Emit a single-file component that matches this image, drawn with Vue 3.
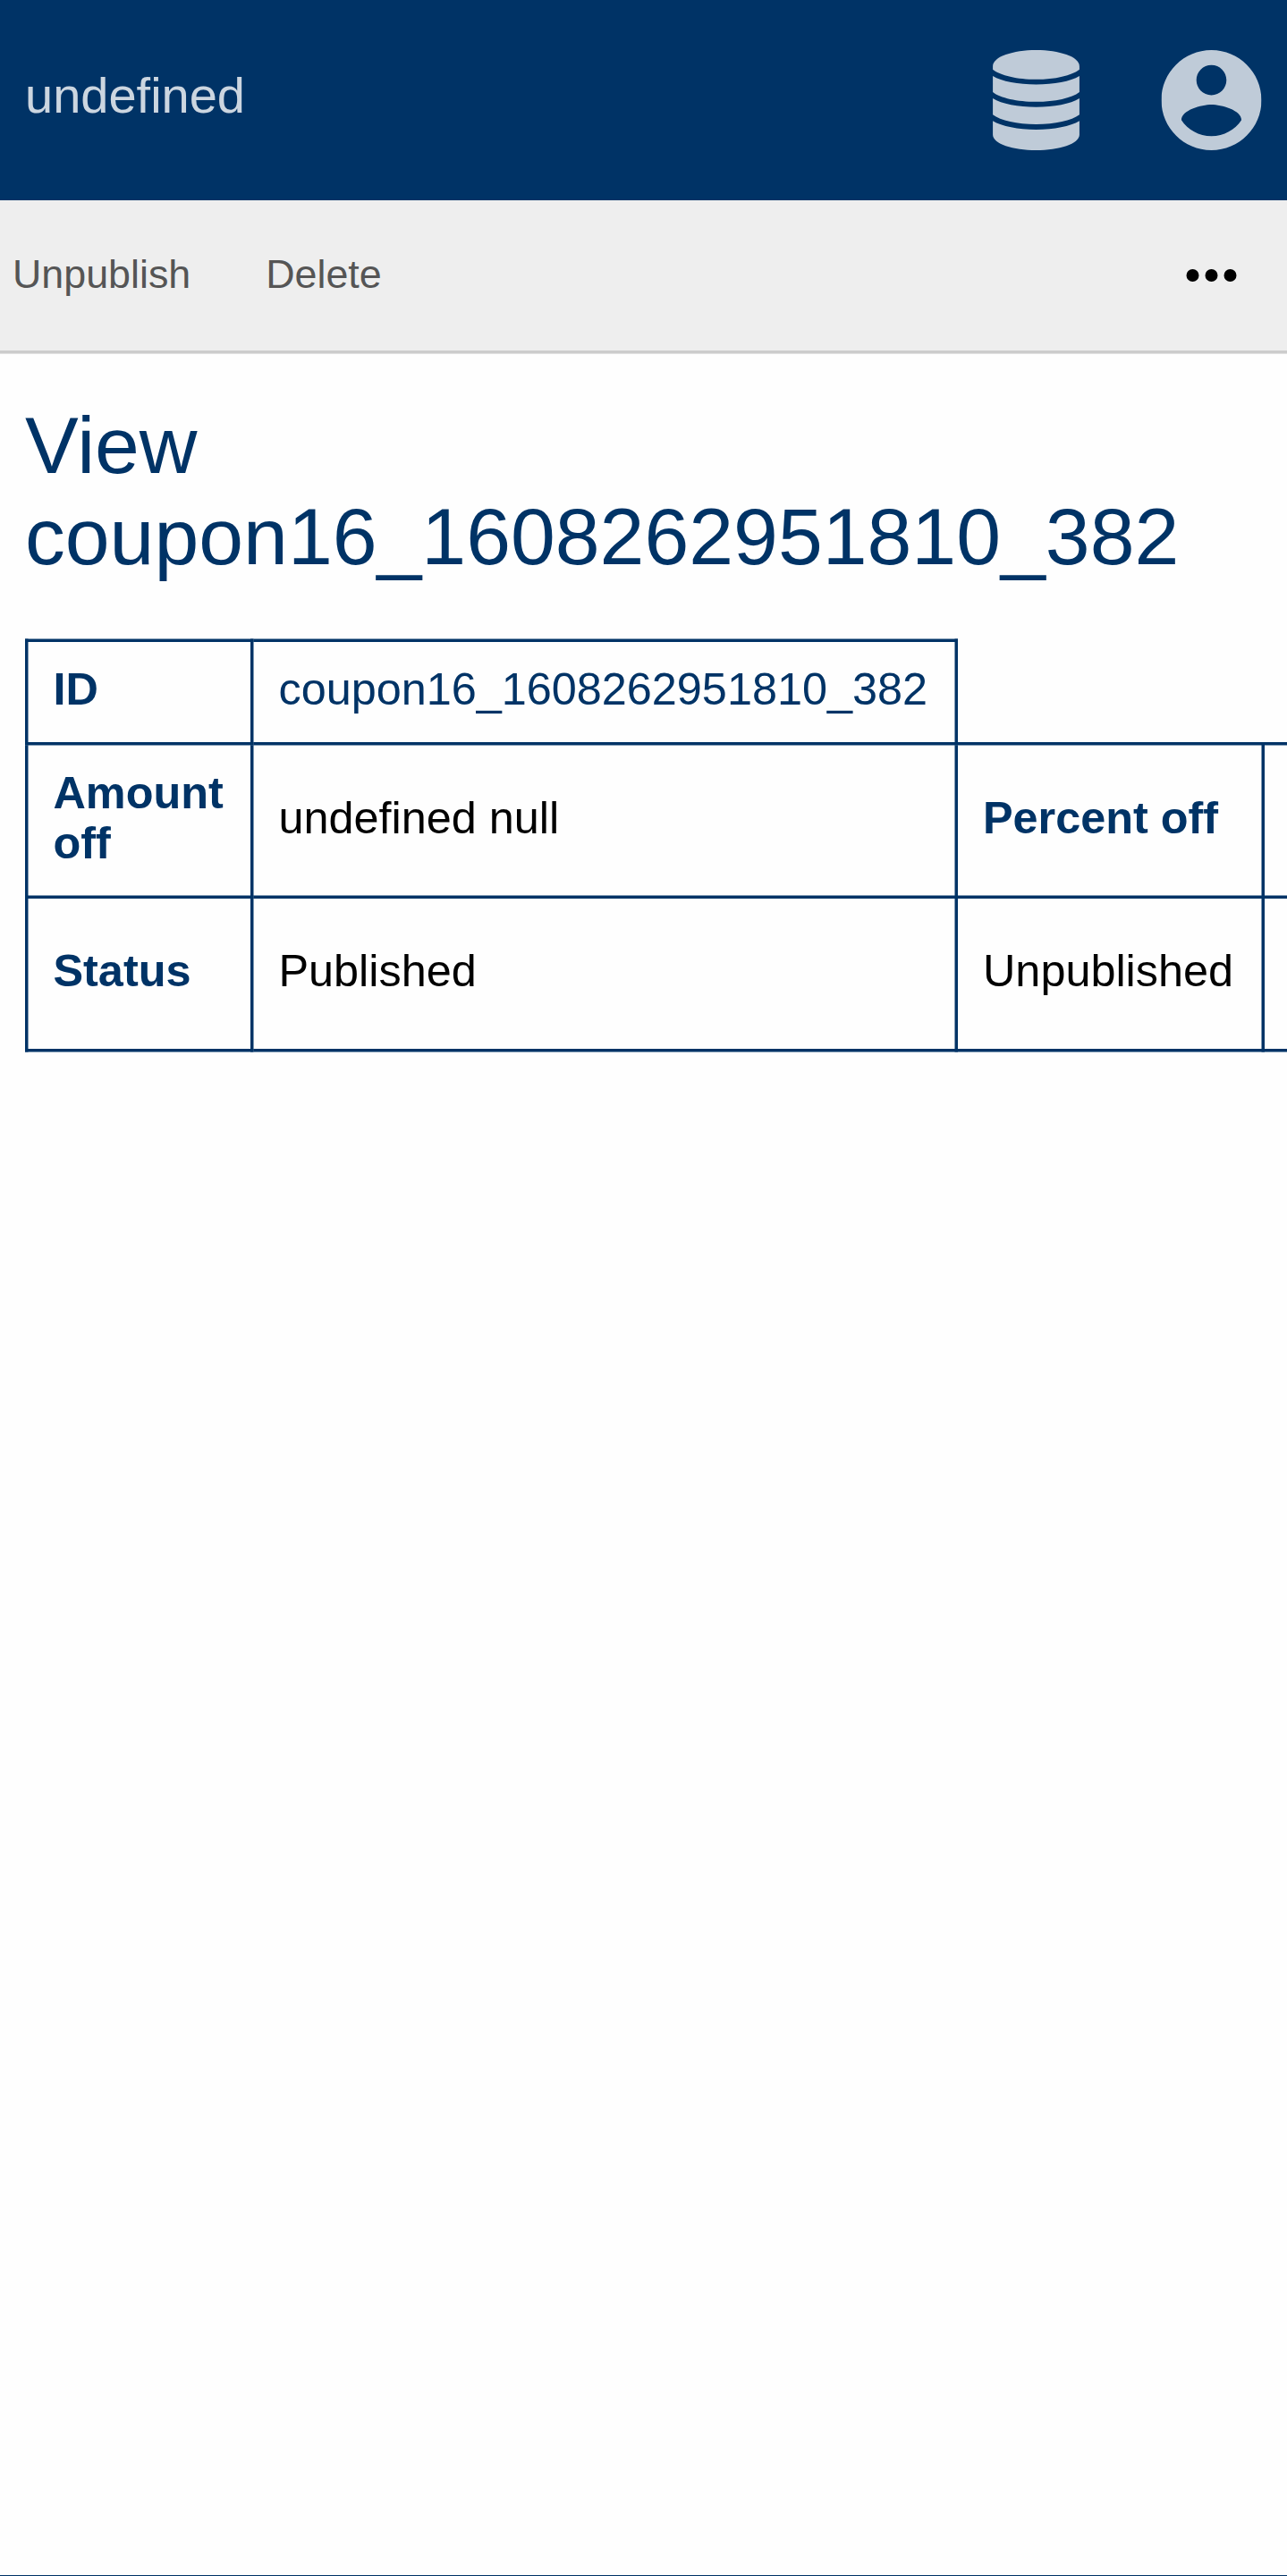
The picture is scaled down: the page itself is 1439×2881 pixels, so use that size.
<script setup>
const title = 'undefined'
const actions = ['Unpublish', 'Delete']
const coupon = 'coupon16_1608262951810_382'
</script>

<template>
  <div class="viewport">
    <div class="screen">
      <header class="header">
        <span class="brand">{{ title }}</span>
        <nav class="menus">
          <svg class="icon" viewBox="-22.75 0 336 336">
            <path d="M0 54C0 22 68 0 145.25 0S290.5 22 290.5 54V65C265 85 208 98.5 145.25 98.5S25 85 0 65Z" />
            <path d="M0 87C30 105 85 115.5 145.25 115.5S260 105 290.5 87V141C265 161 208 173.5 145.25 173.5S25 161 0 141Z" />
            <path d="M0 162C30 181 85 191 145.25 191S260 181 290.5 162V217C265 237 208 249 145.25 249S25 237 0 217Z" />
            <path d="M0 238C30 256 85 267 145.25 267S260 256 290.5 238V284C290.5 314 222 336 145.25 336S0 314 0 284Z" />
          </svg>
          <svg class="icon" viewBox="2 2 20 20">
            <path d="M12 2C6.48 2 2 6.48 2 12s4.48 10 10 10 10-4.48 10-10S17.52 2 12 2zm0 3c1.66 0 3 1.34 3 3s-1.34 3-3 3-3-1.34-3-3 1.34-3 3-3zm0 14.2c-2.5 0-4.71-1.28-6-3.22.03-1.99 4-3.08 6-3.08 1.99 0 5.97 1.09 6 3.08-1.29 1.94-3.5 3.22-6 3.22z" />
          </svg>
        </nav>
      </header>
      <div class="toolbar">
        <a v-for="action in actions" :key="action" class="action">{{ action }}</a>
        <svg class="more" viewBox="0 0 24 24">
          <circle cx="6" cy="12" r="2" />
          <circle cx="12" cy="12" r="2" />
          <circle cx="18" cy="12" r="2" />
        </svg>
      </div>
      <main class="content">
        <h1>View {{ coupon }}</h1>
        <table>
          <colgroup>
            <col class="c1" /><col class="c2" /><col class="c3" /><col class="c4" />
          </colgroup>
          <tbody>
            <tr>
              <th>ID</th>
              <td><a class="link">{{ coupon }}</a></td>
            </tr>
            <tr class="tall">
              <th>Amount off</th>
              <td>undefined null</td>
              <th>Percent off</th>
              <td></td>
            </tr>
            <tr class="tall">
              <th>Status</th>
              <td>Published</td>
              <td>Unpublished</td>
              <td></td>
            </tr>
          </tbody>
        </table>
      </main>
    </div>
  </div>
</template>

<style>
body {
  background: #036;
}
</style>

<style scoped>
.viewport {
  width: 100%;
  height: 2880px;
  overflow: hidden;
  background: #fefefe;
  border-bottom: 1px solid #036;
}
/* Phone-sized layout, enlarged to the device's 3.5 pixel ratio */
.screen {
  width: 412px;
  transform: scale(3.5);
  transform-origin: 0 0;
  color: #000;
  font-family: "Liberation Sans", Arial, sans-serif;
  font-size: 14.4px;
}
.header {
  display: flex;
  justify-content: space-between;
  align-items: flex-start;
  height: 64px;
  padding: 16px 8.857px 0 8px;
  box-sizing: border-box;
  background: #036;
}
.brand {
  margin-top: 5px;
  font-size: 16px;
  line-height: 19px;
  color: rgba(255, 255, 255, 0.8);
}
.menus {
  display: flex;
  gap: 24px;
}
.icon {
  display: block;
  width: 32px;
  height: 32px;
  fill: rgba(255, 255, 255, 0.75);
}
.toolbar {
  display: flex;
  align-items: center;
  gap: 24px;
  height: 48px;
  padding: 0 12.857px 0 4px;
  background: #eee;
  border-bottom: 1px solid #ccc;
}
.action {
  padding-bottom: 0.3px;
  font-size: 12.8px;
  line-height: 14px;
  color: #555;
}
.more {
  width: 24px;
  height: 24px;
  margin-left: auto;
}
.content {
  width: 411px;
  box-sizing: border-box;
  padding: 15px 8px 0;
  overflow: hidden;
  /* half a device pixel, so the rules fall on the device grid */
  transform: translateY(0.143px);
}
h1 {
  margin: 0 0 18px;
  font-size: 25.6px;
  font-weight: 400;
  line-height: 29px;
  color: #036;
}
table {
  width: 496px;
  table-layout: fixed;
  border-collapse: collapse;
}
.c1 { width: 72px; }
.c2 { width: 225px; }
.c3 { width: 98px; }
.c4 { width: 100px; }
th,
td {
  padding: 7px 8px 9px;
  border: 1px solid #036;
  text-align: left;
  vertical-align: middle;
  line-height: 16px;
}
th,
.link {
  color: #036;
}
.tall {
  height: 49px;
}
</style>
